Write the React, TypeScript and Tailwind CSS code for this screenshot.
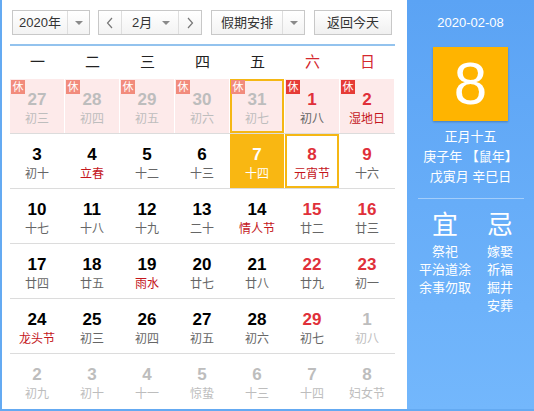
import React from 'react'

const CJK = '"Liberation Sans", "Noto Sans CJK SC", sans-serif'

type Day = {
  n: number
  l: string
  other?: boolean
  fest?: boolean
  rest?: boolean
  today?: boolean
  sel?: boolean
  hover?: boolean
}

const rows: Day[][] = [
  [
    { n: 27, l: '初三', other: true, rest: true },
    { n: 28, l: '初四', other: true, rest: true },
    { n: 29, l: '初五', other: true, rest: true },
    { n: 30, l: '初六', other: true, rest: true },
    { n: 31, l: '初七', other: true, rest: true, hover: true },
    { n: 1, l: '初八', rest: true },
    { n: 2, l: '湿地日', rest: true, fest: true },
  ],
  [
    { n: 3, l: '初十' },
    { n: 4, l: '立春', fest: true },
    { n: 5, l: '十二' },
    { n: 6, l: '十三' },
    { n: 7, l: '十四', today: true },
    { n: 8, l: '元宵节', fest: true, sel: true },
    { n: 9, l: '十六' },
  ],
  [
    { n: 10, l: '十七' },
    { n: 11, l: '十八' },
    { n: 12, l: '十九' },
    { n: 13, l: '二十' },
    { n: 14, l: '情人节', fest: true },
    { n: 15, l: '廿二' },
    { n: 16, l: '廿三' },
  ],
  [
    { n: 17, l: '廿四' },
    { n: 18, l: '廿五' },
    { n: 19, l: '雨水', fest: true },
    { n: 20, l: '廿七' },
    { n: 21, l: '廿八' },
    { n: 22, l: '廿九' },
    { n: 23, l: '初一' },
  ],
  [
    { n: 24, l: '龙头节', fest: true },
    { n: 25, l: '初三' },
    { n: 26, l: '初四' },
    { n: 27, l: '初五' },
    { n: 28, l: '初六' },
    { n: 29, l: '初七' },
    { n: 1, l: '初八', other: true },
  ],
  [
    { n: 2, l: '初九', other: true },
    { n: 3, l: '初十', other: true },
    { n: 4, l: '十一', other: true },
    { n: 5, l: '惊蛰', other: true },
    { n: 6, l: '十三', other: true },
    { n: 7, l: '十四', other: true },
    { n: 8, l: '妇女节', other: true },
  ],
]

const weekdays = ['一', '二', '三', '四', '五', '六', '日']

function Arrow() {
  return (
    <span className="flex w-[22px] items-center justify-center border-l border-[#dedede]">
      <span className="h-0 w-0 border-x-[4px] border-t-[4px] border-x-transparent border-t-[#8a8a8a]" />
    </span>
  )
}

function Cell({ d, weekend }: { d: Day; weekend: boolean }) {
  let numColor = 'text-black'
  let lunarColor = 'text-[#666]'
  if (d.other) {
    numColor = 'text-[#bdbdbd]'
    lunarColor = 'text-[#bdbdbd]'
  } else if (weekend) {
    numColor = 'text-[#e0303a]'
  }
  if (!d.other && d.fest) lunarColor = 'text-[#c4161c]'
  let bg = d.rest ? 'bg-[#fdeaea]' : 'bg-white'
  if (d.today) {
    bg = 'bg-[#f9b712]'
    numColor = 'text-white'
    lunarColor = 'text-white'
  }
  const ring = d.sel || d.hover ? 'border-2 border-[#f5b714]' : 'border-2 border-transparent'
  return (
    <div className="h-[54px] pr-px">
      <div className={'relative flex h-full flex-col items-center ' + bg + ' ' + ring}>
        {d.rest && (
          <span
            className={
              'absolute -left-px -top-px flex h-[14px] w-[14px] items-center justify-center text-[11px] leading-none text-white ' +
              (d.other ? 'bg-[#f28b7c]' : 'bg-[#e63b36]')
            }
          >
            休
          </span>
        )}
        <span className={'mt-[9px] text-[17px] font-bold leading-[20px] ' + numColor}>{d.n}</span>
        <span className={'text-[12px] leading-[18px] ' + lunarColor}>{d.l}</span>
      </div>
    </div>
  )
}

export default function App() {
  return (
    <div
      className="flex h-[411px] w-[534px] border-b-2 border-l-2 border-[#64aaf2] bg-white"
      style={{ fontFamily: CJK }}
    >
      <div className="w-[405px] shrink-0 pl-[8px] pr-[12px]">
        <div className="flex h-[44px] items-start gap-[8px] pl-[2px] pt-[10px] text-[13px] text-[#333]">
          <div className="flex h-[25px] w-[78px] border border-[#c8c8c8] bg-linear-to-b from-white to-[#f3f3f3]">
            <span className="flex flex-1 items-center justify-center">2020年</span>
            <Arrow />
          </div>
          <div className="flex h-[25px] w-[104px] border border-[#c8c8c8] bg-linear-to-b from-white to-[#f3f3f3]">
            <span className="flex w-[22px] items-center justify-center text-[#777]">
              <svg width="8" height="12" viewBox="0 0 8 12">
                <path d="M6 1 L1.5 6 L6 11" fill="none" stroke="#777" strokeWidth="1.2" />
              </svg>
            </span>
            <span className="flex flex-1 items-center border-x border-[#dedede] pl-[10px]">
              <span className="flex-1">2月</span>
              <span className="mr-[8px] h-0 w-0 border-x-[4px] border-t-[4px] border-x-transparent border-t-[#8a8a8a]" />
            </span>
            <span className="flex w-[22px] items-center justify-center">
              <svg width="8" height="12" viewBox="0 0 8 12">
                <path d="M2 1 L6.5 6 L2 11" fill="none" stroke="#777" strokeWidth="1.2" />
              </svg>
            </span>
          </div>
          <div className="ml-px flex h-[25px] w-[94px] border border-[#c8c8c8] bg-linear-to-b from-white to-[#f3f3f3]">
            <span className="flex flex-1 items-center justify-center">假期安排</span>
            <Arrow />
          </div>
          <div className="ml-px flex h-[25px] w-[78px] items-center justify-center border border-[#c8c8c8] bg-linear-to-b from-white to-[#f0f0f0]">
            返回今天
          </div>
        </div>
        <div className="h-[2px] bg-[#93c3ee]" />
        <div className="grid h-[33px] grid-cols-7 items-center text-center text-[15px]">
          {weekdays.map((w, i) => (
            <span key={w} className={i >= 5 ? 'text-[#d4282e]' : 'text-[#222]'}>
              {w}
            </span>
          ))}
        </div>
        {rows.map((r, ri) => (
          <div
            key={ri}
            className={'grid grid-cols-7 ' + (ri < rows.length - 1 ? 'border-b border-[#dcdcdc]' : '')}
          >
            {r.map((d, ci) => (
              <Cell key={ci} d={d} weekend={ci >= 5} />
            ))}
          </div>
        ))}
      </div>
      <div className="flex flex-1 flex-col items-center bg-linear-to-b from-[#5ba3f4] to-[#73b7fc] text-white">
        <div className="mt-[15px] text-[13px] leading-[16px]">2020-02-08</div>
        <div className="mt-[16px] flex h-[74px] w-[75px] items-center justify-center bg-[#ffb400] text-[60px] leading-none shadow-[0_1px_2px_rgba(0,0,0,0.25)]">
          8
        </div>
        <div className="mt-[6px] flex flex-col items-center text-[13px] leading-[20px]">
          <span>正月十五</span>
          <span>庚子年 【鼠年】</span>
          <span>戊寅月 辛巳日</span>
        </div>
        <div className="mt-[11px] h-px w-[106px] bg-white/40" />
        <div className="flex w-full gap-4 pl-[12px] pt-[10px]">
          <div className="flex flex-col items-center">
            <span className="text-[26px] leading-[32px]">宜</span>
            <span className="mt-[2px] text-[13px] leading-[18px]">祭祀</span>
            <span className="text-[13px] leading-[18px]">平治道涂</span>
            <span className="text-[13px] leading-[18px]">余事勿取</span>
          </div>
          <div className="flex flex-col items-center">
            <span className="text-[26px] leading-[32px]">忌</span>
            <span className="mt-[2px] text-[13px] leading-[18px]">嫁娶</span>
            <span className="text-[13px] leading-[18px]">祈福</span>
            <span className="text-[13px] leading-[18px]">掘井</span>
            <span className="text-[13px] leading-[18px]">安葬</span>
          </div>
        </div>
      </div>
    </div>
  )
}
